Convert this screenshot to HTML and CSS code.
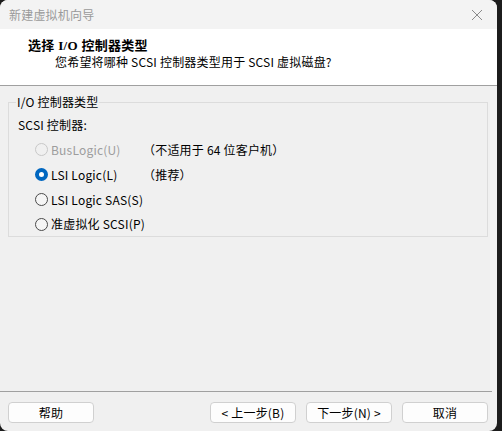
FILE: index.html
```html
<!DOCTYPE html>
<html lang="zh-CN">
<head>
<meta charset="utf-8">
<title>新建虚拟机向导</title>
<link rel="stylesheet" href="styles.css">
</head>
<body>
<div class="window">
  <div class="titlebar">
    <span class="title-text">新建虚拟机向导</span>
    <svg class="close" width="12" height="12" viewBox="0 0 12 12"><path d="M1 1 L11 11 M11 1 L1 11" stroke="#8a8a8a" stroke-width="1" fill="none"/></svg>
  </div>
  <div class="header">
    <div class="h-title">选择 I/O 控制器类型</div>
    <div class="h-sub">您希望将哪种 SCSI 控制器类型用于 SCSI 虚拟磁盘?</div>
  </div>
  <div class="main">
    <fieldset class="group">
      <legend>I/O 控制器类型</legend>
      <div class="sublabel">SCSI 控制器:</div>
      <div class="row disabled">
        <span class="radio"></span><span class="label">BusLogic(U)</span><span class="note">（不适用于 64 位客户机）</span>
      </div>
      <div class="row">
        <span class="radio checked"></span><span class="label">LSI Logic(L)</span><span class="note">（推荐）</span>
      </div>
      <div class="row">
        <span class="radio"></span><span class="label">LSI Logic SAS(S)</span>
      </div>
      <div class="row">
        <span class="radio"></span><span class="label">准虚拟化 SCSI(P)</span>
      </div>
    </fieldset>
  </div>
  <div class="separator"></div>
  <div class="footer">
    <button class="btn">帮助</button>
    <div class="spacer"></div>
    <button class="btn">&lt; 上一步(B)</button>
    <button class="btn">下一步(N) &gt;</button>
    <button class="btn">取消</button>
  </div>
</div>
</body>
</html>
```
FILE: styles.css
```css
html, body {
  margin: 0;
  padding: 0;
  background: #1c1c1c;
}
body {
  width: 502px;
  height: 431px;
  overflow: hidden;
  font-family: "Noto Sans CJK SC", "Noto Sans", sans-serif;
  font-size: 12px;
  letter-spacing: 0.2px;
  color: #000;
}
.window {
  width: 497px;
  height: 431px;
  background: #f0f0f0;
  border-radius: 8px;
  overflow: hidden;
  display: flex;
  flex-direction: column;
}
.titlebar {
  height: 29px;
  flex: none;
  background: #f3f3f3;
  display: flex;
  align-items: center;
  padding: 0 9px;
  justify-content: space-between;
}
.title-text {
  color: #9a9a9a;
  font-size: 12px;
  line-height: 16px;
}
.close {
  margin-right: 5px;
  margin-top: 1px;
}
.header {
  height: 57px;
  flex: none;
  background: #fff;
  border-bottom: 1px solid #a0a0a0;
  box-sizing: border-box;
  padding-top: 9px;
}
.h-title {
  font-family: "Liberation Serif", "Noto Sans CJK SC", serif;
  font-weight: bold;
  font-size: 13px;
  letter-spacing: 0.3px;
  line-height: 16px;
  padding-left: 28px;
}
.h-sub {
  line-height: 16px;
  padding-left: 55px;
}
.main {
  flex: 1;
  padding: 8px 9px 0 8px;
}
.group {
  margin: 0;
  border: 1px solid #dcdcdc;
  padding: 0 9px 0 9px;
  min-width: 0;
}
.group legend {
  padding: 0 1px;
  margin-left: -2px;
  line-height: 16px;
}
.sublabel {
  line-height: 16px;
  margin-top: 7px;
  margin-bottom: 4px;
}
.row {
  height: 25px;
  display: flex;
  align-items: center;
  padding-left: 17px;
}
.row:last-child {
  height: 24px;
}
.radio {
  width: 11px;
  height: 11px;
  border: 1px solid #4a4a4a;
  border-radius: 50%;
  background: #f5f5f5;
  flex: none;
  box-sizing: content-box;
}
.radio.checked {
  width: 5px;
  height: 5px;
  border: 4px solid #0067c0;
  background: #fff;
}
.disabled .radio {
  border-color: #c8c8c8;
  background: #f0f0f0;
}
.disabled {
  color: #9d9d9d;
}
.disabled .note {
  color: #000;
}
.label {
  margin-left: 3px;
  width: 92px;
  white-space: nowrap;
  line-height: 16px;
}
.note {
  line-height: 16px;
  white-space: nowrap;
}
.separator {
  height: 1px;
  background: #a0a0a0;
  margin-right: 5px;
  flex: none;
}
.footer {
  height: 39px;
  flex: none;
  box-sizing: border-box;
  padding: 10px 9px 0 8px;
  display: flex;
  align-items: flex-start;
  gap: 10px;
}
.spacer {
  flex: 1;
}
.btn {
  width: 86px;
  height: 21px;
  background: #fdfdfd;
  border: 1px solid #d0d0d0;
  border-radius: 4px;
  font-family: "Noto Sans CJK SC", "Noto Sans", sans-serif;
  font-size: 12px;
  letter-spacing: 0.2px;
  color: #000;
  padding: 0;
  line-height: 16px;
}
```
